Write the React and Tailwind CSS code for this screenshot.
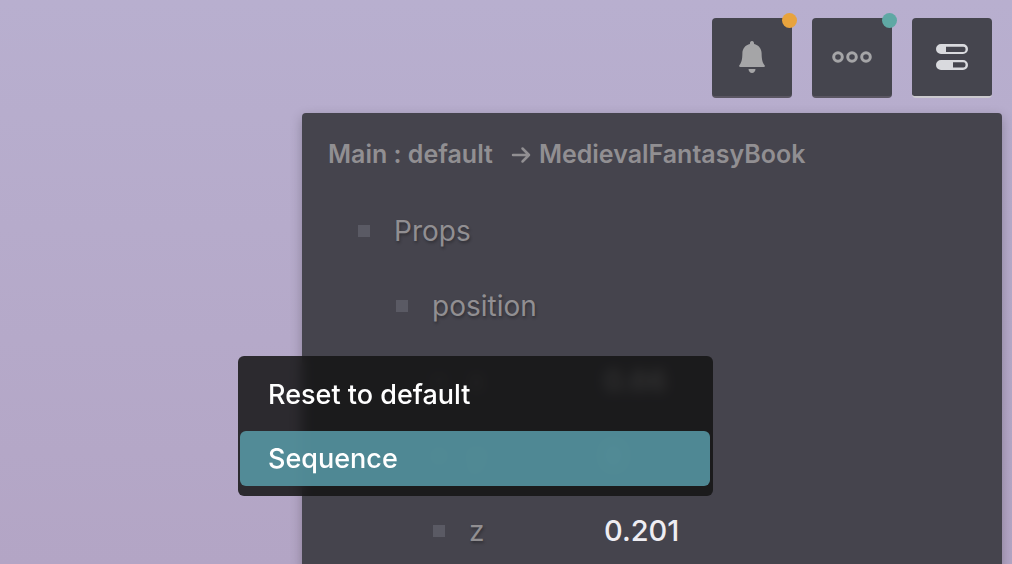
const TOOLS = [
  { id: 'notifications', label: 'Notifications', icon: BellIcon, dot: 'bg-[#e8a33d]' },
  { id: 'more', label: 'More', icon: MoreIcon, dot: 'bg-[#5fa8a4]' },
  { id: 'details', label: 'Details', icon: DetailsIcon, active: true },
]

const ROWS = [
  { id: 'props', label: 'Props', indent: 'pl-14' },
  { id: 'position', label: 'position', indent: 'pl-[94px]' },
  { id: 'x', label: 'x', indent: 'pl-[131px]', value: '0.66' },
  { id: 'y', label: 'y', indent: 'pl-[131px]', value: '0' },
  { id: 'z', label: 'z', indent: 'pl-[131px]', value: '0.201' },
]

const MENU_ITEMS = [
  { id: 'reset', label: 'Reset to default' },
  { id: 'sequence', label: 'Sequence', active: true },
]

function BellIcon() {
  return (
    <svg viewBox="0 0 28 34" className="h-[34px] w-7" fill="currentColor" aria-hidden="true">
      <path d="M14 1c1.400 0 2.100 1.100 2.100 2.900C20.500 4.800 23.500 8.500 23.600 13c.1 6.500.8 9.500 3 12.200.7.900.4 1.800-.8 1.800H2.200c-1.200 0-1.500-.9-.8-1.800 2.200-2.700 2.900-5.700 3-12.200.1-4.500 3.100-8.200 7.500-9.100C11.900 2.100 12.600 1 14 1Z" />
      <path d="M10.500 29h7c0 2-1.500 4-3.500 4s-3.500-2-3.500-4Z" />
    </svg>
  )
}

function MoreIcon() {
  return (
    <svg viewBox="0 0 40 12" className="h-3 w-10" fill="none" stroke="currentColor" strokeWidth="3" aria-hidden="true">
      <circle cx="6" cy="6" r="4.300" />
      <circle cx="20" cy="6" r="4.300" />
      <circle cx="34" cy="6" r="4.300" />
    </svg>
  )
}

function DetailsIcon() {
  return (
    <svg viewBox="0 0 32 26" className="h-[26px] w-8" fill="currentColor" fillRule="evenodd" aria-hidden="true">
      <path d="M5 0h22a5 5 0 0 1 0 10H5A5 5 0 0 1 5 0Zm5 2.800v5.200h17.500a2 2 0 0 0 2-2V4.800a2 2 0 0 0-2-2Z" />
      <path d="M5 16h22a5 5 0 0 1 0 10H5a5 5 0 0 1 0-10Zm12 2.200v5.300h10.500a2 2 0 0 0 2-2v-1.300a2 2 0 0 0-2-2Z" />
    </svg>
  )
}

function ToolButton({ tool }) {
  const Icon = tool.icon

  return (
    <button
      type="button"
      aria-label={tool.label}
      className={`relative flex size-20 items-center justify-center rounded border-b-2 bg-[#45454e] ${
        tool.active ? 'border-[#cbc9cf] text-[#d9dade]' : 'border-[#5a5662] text-[#a5a5a7]'
      }`}
    >
      <Icon />
      {tool.dot && <span className={`absolute -right-[5px] -top-[5px] size-[15px] rounded-full ${tool.dot}`} />}
    </button>
  )
}

function PropRow({ row }) {
  return (
    <div className={`flex h-[75px] items-center ${row.indent}`}>
      <span className="mr-6 size-3 shrink-0 bg-[#5a5a64]" />
      <label
        htmlFor={row.value ? row.id : undefined}
        className="w-[135px] text-[28px] leading-9 text-[#918f92] [text-shadow:1px_2px_3px_rgba(0,0,0,0.3)]"
      >
        {row.label}
      </label>
      {row.value && (
        <input
          id={row.id}
          type="text"
          defaultValue={row.value}
          className="w-40 bg-transparent text-[29px] font-medium leading-9 text-[#eeedf2] outline-none"
        />
      )}
    </div>
  )
}

function ContextMenu() {
  return (
    <div
      role="menu"
      className="absolute -left-16 top-[243px] flex w-[475px] flex-col gap-1.5 rounded-md bg-[#141414]/85 pb-2.5 pl-0.5 pr-[3px] pt-2 backdrop-blur-[6px]"
    >
      {MENU_ITEMS.map((item) => (
        <button
          key={item.id}
          type="button"
          role="menuitem"
          className={`flex items-center rounded-md px-7 text-left text-[27px] font-medium leading-9 text-white ${
            item.active ? 'h-[55px] bg-[#5ba0ad]/83' : 'h-[61px]'
          }`}
        >
          {item.label}
        </button>
      ))}
    </div>
  )
}

export default function App() {
  return (
    <main className="flex h-screen flex-col overflow-hidden bg-linear-to-b from-[#b8afcf] to-[#b3a5c5] font-['Inter',sans-serif]">
      <div className="flex justify-end gap-5 pr-5 pt-[18px]">
        {TOOLS.map((tool) => (
          <ToolButton key={tool.id} tool={tool} />
        ))}
      </div>

      <section className="relative mr-2.5 mt-[15px] w-[700px] flex-1 self-end rounded-t bg-[#45444d] shadow-[0_4px_12px_rgba(0,0,0,0.25)]">
        <h1 className="flex h-20 items-center pl-[26px] pt-1 text-[25px] font-semibold text-[#918f92]">
          Main : default
          <svg viewBox="0 0 20 18" className="ml-[18px] mr-2 h-[18px] w-5" fill="none" stroke="currentColor" strokeWidth="2.500" strokeLinecap="round" strokeLinejoin="round" aria-hidden="true">
            <path d="M2 9h16M11.500 2.500 18 9l-6.500 6.500" />
          </svg>
          MedievalFantasyBook
        </h1>
        {ROWS.map((row) => (
          <PropRow key={row.id} row={row} />
        ))}
        <ContextMenu />
      </section>
    </main>
  )
}
